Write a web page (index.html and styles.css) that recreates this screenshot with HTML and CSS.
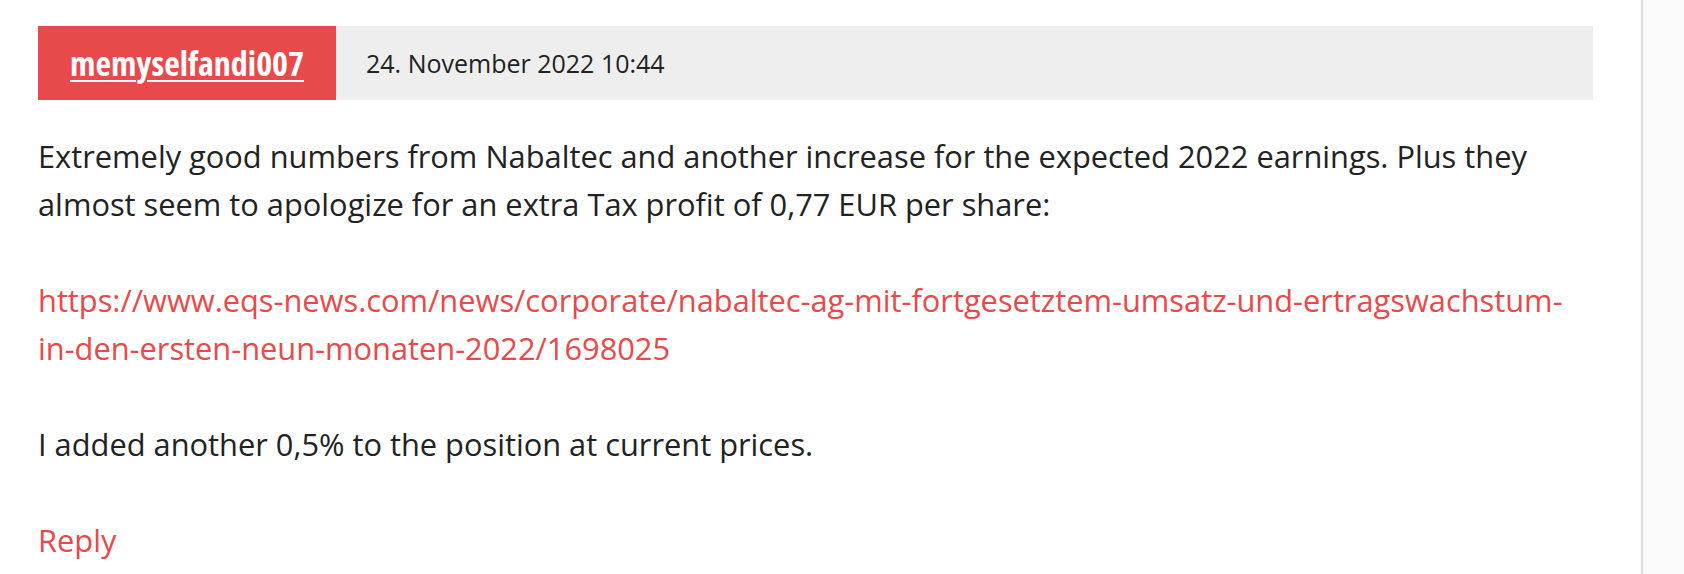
FILE: index.html
```html
<!DOCTYPE html>
<html lang="en">
<head>
<meta charset="utf-8">
<title>Comment</title>
<link rel="stylesheet" href="styles.css">
</head>
<body>
<div class="page">
  <article class="comment">
    <header class="comment-head">
      <div class="author"><a href="#" class="author-link">memyselfandi007</a></div>
      <div class="date">24. November 2022 10:44</div>
    </header>
    <div class="comment-body">
      <p>Extremely good numbers from Nabaltec and another increase for the expected 2022 earnings. Plus they almost seem to apologize for an extra Tax profit of 0,77 EUR per share:</p>
      <p><a href="#" class="link">https://www.eqs-news.com/news/corporate/nabaltec-ag-mit-fortgesetztem-umsatz-und-ertragswachstum-in-den-ersten-neun-monaten-2022/1698025</a></p>
      <p>I added another 0,5% to the position at current prices.</p>
      <p class="reply"><a href="#" class="link">Reply</a></p>
    </div>
  </article>
</div>
</body>
</html>
```
FILE: styles.css
```css
html, body {
  margin: 0;
  padding: 0;
  background: #fafafa;
}
body {
  font-family: "Open Sans", "Liberation Sans", sans-serif;
  color: #222;
}
.page {
  width: 1643px;
  box-sizing: border-box;
  background: #fff;
  border-right: 2px solid #dedede;
  padding: 26px 0 0 38px;
  min-height: 574px;
}
.comment {
  width: 1555px;
}
.comment-head {
  display: flex;
  align-items: stretch;
  height: 74px;
  background: #eeeeee;
}
.author {
  width: 298px;
  background: #e8494a;
  display: flex;
  align-items: center;
  justify-content: center;
}
.author-link {
  color: #fff;
  font-family: "Open Sans", sans-serif;
  font-weight: 700;
  font-stretch: 75%;
  font-size: 34px;
  text-decoration: underline;
  text-decoration-thickness: 2px;
  text-underline-offset: 4px;
}
.date {
  display: flex;
  align-items: center;
  padding-left: 30px;
  font-size: 25px;
  color: #222;
}
.comment-body {
  padding-top: 32px;
}
.comment-body p {
  margin: 0 0 48px 0;
  font-size: 30.8px;
  line-height: 48px;
}
.comment-body p.reply {
  margin: 0;
}
.link {
  color: #e8494a;
  text-decoration: none;
}
```
